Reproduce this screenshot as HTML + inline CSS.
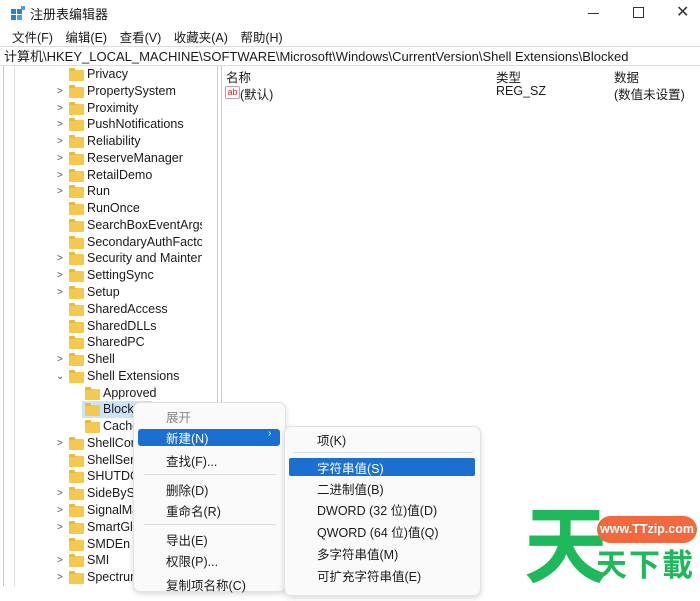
<!DOCTYPE html><html><head><meta charset="utf-8"><style>
*{margin:0;padding:0;box-sizing:border-box}
body{width:700px;height:586px;overflow:hidden;background:#fff;font-family:"Liberation Sans","Noto Sans CJK SC",sans-serif;font-size:12.5px;color:#1a1a1a;position:relative}
.a{position:absolute;white-space:nowrap}
.row{position:absolute;height:17px;line-height:17px}
.fold{position:absolute;width:15px;height:11px;background:#f3c94f;border-radius:1px;top:4px}
.fold:before{content:"";position:absolute;left:0;top:-2px;width:6px;height:3px;background:#e9b93a;border-radius:1px 1px 0 0}
.arr{position:absolute;font-size:10px;color:#555;top:0}
.mi{position:absolute;left:32px;font-size:12.5px}
</style></head><body>
<svg class="a" style="left:10px;top:6px" width="16" height="16"><rect x="1" y="3" width="5" height="5" fill="#2d7fd3"/><rect x="7" y="3" width="5" height="5" fill="#2d7fd3"/><rect x="1" y="9" width="5" height="5" fill="#2d7fd3"/><rect x="7" y="9" width="5" height="5" fill="#4aa0e6"/><rect x="11" y="0" width="4" height="4" fill="#4aa0e6"/></svg>
<div class="a" style="left:30px;top:4px;font-size:13px">注册表编辑器</div>
<div class="a" style="left:588px;top:13px;width:11px;height:1px;background:#333"></div>
<div class="a" style="left:633px;top:7px;width:11px;height:11px;border:1px solid #333"></div>
<div class="a" style="left:676px;top:2px;font-size:16px;color:#333">✕</div>
<div class="a" style="left:12px;top:27px;word-spacing:9px">文件(F) 编辑(E) 查看(V) 收藏夹(A) 帮助(H)</div>
<div class="a" style="left:0;top:46px;width:700px;height:20px;border-top:1px solid #ddd;border-bottom:1px solid #ddd"></div>
<div class="a" style="left:4px;top:46px;font-size:13px">计算机\HKEY_LOCAL_MACHINE\SOFTWARE\Microsoft\Windows\CurrentVersion\Shell Extensions\Blocked</div>
<div class="a" style="left:3px;top:66px;width:1px;height:520px;background:#ccc"></div>
<div class="a" style="left:14px;top:66px;width:1px;height:520px;background:#ddd"></div>
<div class="a" style="left:217px;top:66px;width:1px;height:520px;background:#ccc"></div>
<div class="a" style="left:221px;top:66px;width:1px;height:520px;background:#ccc"></div>
<div id="tree" class="a" style="left:0;top:66px;width:202px;height:520px;overflow:hidden"></div>
<div class="a" style="left:226px;top:67px">名称</div>
<div class="a" style="left:496px;top:67px">类型</div>
<div class="a" style="left:614px;top:67px">数据</div>
<div class="a" style="left:225px;top:86px;width:15px;height:13px;border:1px solid #c9a;border-radius:2px;font-size:9px;color:#d22;line-height:11px;text-align:center">ab</div>
<div class="a" style="left:240px;top:84px">(默认)</div>
<div class="a" style="left:496px;top:84px">REG_SZ</div>
<div class="a" style="left:614px;top:84px">(数值未设置)</div>
<div class="a" style="left:133px;top:402px;width:153px;height:190px;background:#fafafa;border:1px solid #e2e2e2;border-radius:7px;box-shadow:0 2px 6px rgba(0,0,0,.15)">
<div class="a" style="left:4px;top:26px;width:142px;height:17px;background:#1a6fd1;border-radius:3px"></div>
<div class="mi" style="top:4px;color:#888">展开</div>
<div class="mi" style="top:25px;color:#fff">新建(N)</div>
<div class="a" style="left:134px;top:25px;color:#fff;font-size:10px">›</div>
<div class="mi" style="top:48px">查找(F)...</div>
<div class="a" style="left:10px;top:71px;width:132px;height:1px;background:#ddd"></div>
<div class="mi" style="top:77px">删除(D)</div>
<div class="mi" style="top:98px">重命名(R)</div>
<div class="a" style="left:10px;top:121px;width:132px;height:1px;background:#ddd"></div>
<div class="mi" style="top:127px">导出(E)</div>
<div class="mi" style="top:148px">权限(P)...</div>
<div class="mi" style="top:172px">复制项名称(C)</div>
</div>
<div class="a" style="left:284px;top:426px;width:197px;height:170px;background:#fafafa;border:1px solid #e2e2e2;border-radius:7px;box-shadow:0 2px 6px rgba(0,0,0,.15)">
<div class="a" style="left:4px;top:31px;width:186px;height:18px;background:#1a6fd1;border-radius:2px"></div>
<div class="mi" style="top:3px">项(K)</div>
<div class="a" style="left:8px;top:25px;width:180px;height:1px;background:#ddd"></div>
<div class="mi" style="top:31px;color:#fff">字符串值(S)</div>
<div class="mi" style="top:52px">二进制值(B)</div>
<div class="mi" style="top:73px">DWORD (32 位)值(D)</div>
<div class="mi" style="top:95px">QWORD (64 位)值(Q)</div>
<div class="mi" style="top:117px">多字符串值(M)</div>
<div class="mi" style="top:139px">可扩充字符串值(E)</div>
</div>
<div class="a" style="left:524px;top:496px;font-size:84px;font-weight:bold;color:#1fb85a;font-family:'Noto Sans CJK SC',sans-serif;line-height:90px">天</div>
<div class="a" style="left:597px;top:516px;width:100px;height:27px;background:#f2693f;border-radius:14px;color:#fff;font-weight:bold;font-size:12.5px;line-height:27px;text-align:center">www.TTzip.com</div>
<div class="a" style="left:596px;top:543px;font-size:31px;font-weight:bold;color:#1fb85a;font-family:'Noto Sans CJK SC',sans-serif;letter-spacing:2px;line-height:40px">天下載</div>
<script>
var R=[["Privacy",0],["PropertySystem",1],["Proximity",1],["PushNotifications",1],["Reliability",1],["ReserveManager",1],["RetailDemo",1],["Run",1],["RunOnce",0],["SearchBoxEventArgs",0],["SecondaryAuthFactor",0],["Security and Maintenance",1],["SettingSync",1],["Setup",1],["SharedAccess",0],["SharedDLLs",0],["SharedPC",0],["Shell",1],["Shell Extensions",2],["Approved",3],["Blocked",4],["Cached",3],["ShellCompat",1],["ShellServiceObjects",0],["SHUTDOWN",0],["SideBySide",1],["SignalManager",1],["SmartGlass",1],["SMDEn",0],["SMI",1],["Spectrum",1]];
var t=document.getElementById('tree'),h='';
R.forEach(function(r,i){var y=i*16.77,c=r[1]>=3,fx=c?85:69;
if(r[1]==4)h+='<div class="row" style="left:82px;top:'+y+'px;width:70px;background:#cce4f7"></div>';
h+='<div class="row" style="left:0;top:'+y+'px;width:202px">';
if(r[1]==1)h+='<span class="arr" style="left:57px">&gt;</span>';
if(r[1]==2)h+='<span class="arr" style="left:56px">&#8964;</span>';
h+='<span class="fold" style="left:'+fx+'px"></span><span style="position:absolute;left:'+(fx+18)+'px">'+r[0]+'</span></div>';});
t.innerHTML=h;
</script>
</body></html>
